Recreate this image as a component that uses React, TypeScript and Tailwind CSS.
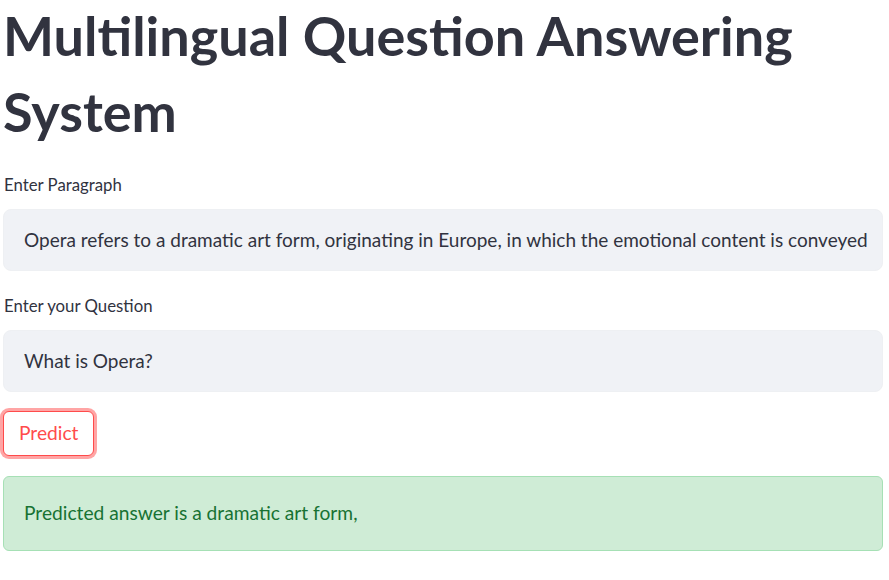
import React from "react";

export default function App() {
  return (
    <div className="w-[889px] h-[580px] bg-white pl-[3px] pr-[6px] font-['Lato',sans-serif] text-[#31333f] overflow-hidden">
      <h1 className="text-[54px] font-bold leading-[76px] mt-[-2px] m-0">
        Multilingual Question Answering System
      </h1>
      <div className="mt-[23px] text-[16.8px] leading-[24px] pl-[1px]">Enter Paragraph</div>
      <div className="mt-[12px] h-[62px] rounded-[8px] bg-[#f0f2f6] border border-[#eef0f3] flex items-center px-[20px] text-[19px] whitespace-nowrap overflow-hidden">
        Opera refers to a dramatic art form, originating in Europe, in which the emotional content is conveyed
      </div>
      <div className="mt-[23px] text-[16.8px] leading-[24px] pl-[1px]">Enter your Question</div>
      <div className="mt-[12px] h-[62px] rounded-[8px] bg-[#f0f2f6] border border-[#eef0f3] flex items-center px-[20px] text-[19px] whitespace-nowrap overflow-hidden">
        What is Opera?
      </div>
      <div className="mt-[19px] flex">
        <button className="h-[45px] px-[15px] rounded-[6px] border border-[#ff4b4b] bg-white text-[#ff4b4b] text-[19.2px] shadow-[0_0_0_3px_rgba(255,75,75,0.5)]">
          Predict
        </button>
      </div>
      <div className="mt-[20px] h-[75px] rounded-[6px] bg-[#cfecd6] border border-[#a6e0b5] flex items-center px-[20px] text-[19.2px] text-[#177233]">
        Predicted answer is a dramatic art form,
      </div>
    </div>
  );
}
